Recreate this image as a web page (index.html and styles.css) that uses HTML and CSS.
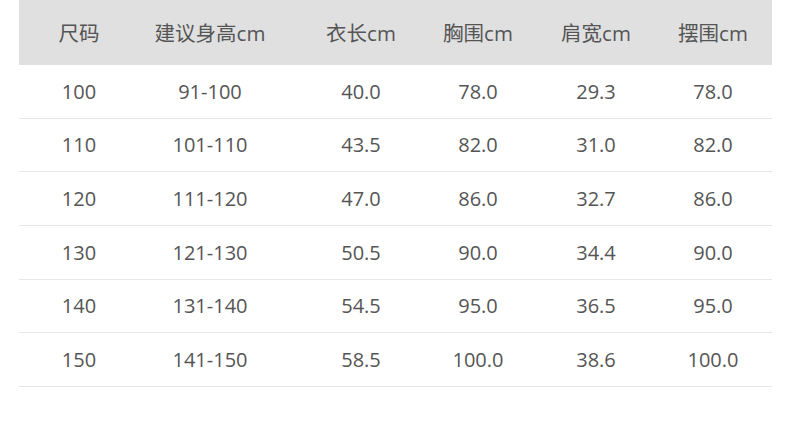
FILE: index.html
```html
<!DOCTYPE html>
<html lang="zh">
<head>
<meta charset="utf-8">
<link rel="stylesheet" href="styles.css">
</head>
<body>
<div class="table">
  <div class="row head">
    <div>尺码</div><div>建议身高cm</div><div>衣长cm</div><div>胸围cm</div><div>肩宽cm</div><div>摆围cm</div><div></div>
  </div>
  <div class="row"><div>100</div><div>91-100</div><div>40.0</div><div>78.0</div><div>29.3</div><div>78.0</div><div></div></div>
  <div class="row"><div>110</div><div>101-110</div><div>43.5</div><div>82.0</div><div>31.0</div><div>82.0</div><div></div></div>
  <div class="row"><div>120</div><div>111-120</div><div>47.0</div><div>86.0</div><div>32.7</div><div>86.0</div><div></div></div>
  <div class="row"><div>130</div><div>121-130</div><div>50.5</div><div>90.0</div><div>34.4</div><div>90.0</div><div></div></div>
  <div class="row"><div>140</div><div>131-140</div><div>54.5</div><div>95.0</div><div>36.5</div><div>95.0</div><div></div></div>
  <div class="row"><div>150</div><div>141-150</div><div>58.5</div><div>100.0</div><div>38.6</div><div>100.0</div><div></div></div>
</div>
</body>
</html>
```

FILE: styles.css
```css
html, body {
  margin: 0;
  padding: 0;
  background: #fff;
}
body {
  font-family: "Open Sans", "Noto Sans CJK SC", sans-serif;
  color: #555;
  font-size: 20px;
}
.table {
  margin-left: 19px;
  width: 753px;
}
.row {
  display: grid;
  grid-template-columns: 120px 142px 160px 74px 162px 72px 1fr;
  height: 53.67px;
  box-sizing: border-box;
  border-bottom: 1px solid #e6e6e6;
  align-items: center;
  white-space: nowrap;
}
.row > div {
  display: flex;
  justify-content: center;
}
.row.head {
  height: 65px;
  background: #e0e0e0;
  border-bottom: none;
  font-size: 20.5px;
  padding-bottom: 2px;
}
```
